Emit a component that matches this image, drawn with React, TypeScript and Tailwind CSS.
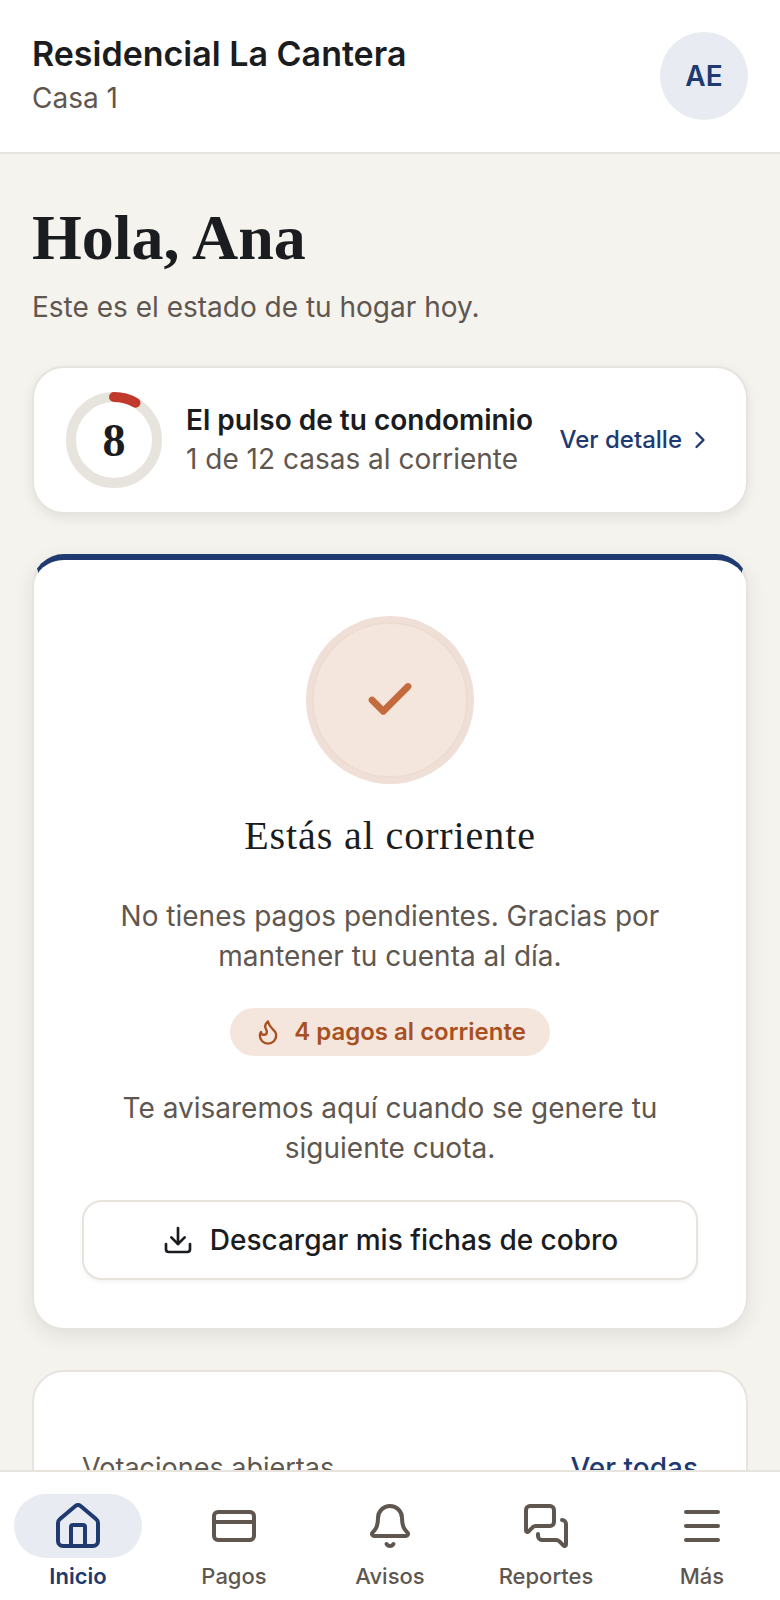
import { Check, ChevronRight, CreditCard, Bell, Download, Flame, Menu, MessagesSquare } from "lucide-react";

function HomeIcon({ className }: { size?: number; strokeWidth?: number; className?: string }) {
  return (
    <svg width="48" height="48" viewBox="0 0 24 24" fill="none" stroke="currentColor" strokeWidth="2" strokeLinecap="round" strokeLinejoin="round" className={className}>
      <path d="M2 10.5Q2 9.3 3 8.5L10.7 2Q12 1 13.3 2L21 8.5Q22 9.3 22 10.5V19.5A2.5 2.5 0 0 1 19.5 22H4.5A2.5 2.5 0 0 1 2 19.5Z" />
      <path d="M8.5 22V12.5A1 1 0 0 1 9.5 11.5H14.5A1 1 0 0 1 15.5 12.5V22" />
    </svg>
  );
}

const NAV = [
  { label: "Inicio", Icon: HomeIcon, active: true },
  { label: "Pagos", Icon: CreditCard, active: false },
  { label: "Avisos", Icon: Bell, active: false },
  { label: "Reportes", Icon: MessagesSquare, active: false },
  { label: "Más", Icon: Menu, active: false },
];

const serif = "font-['Liberation_Serif',serif]";

function Ring() {
  return (
    <div className="relative h-24 w-24 shrink-0">
      <svg viewBox="0 0 96 96" className="h-24 w-24 -rotate-90">
        <circle cx="48" cy="48" r="43" fill="none" stroke="#e7e4de" strokeWidth="10" />
        <circle cx="48" cy="48" r="43" fill="none" stroke="#c0392b" strokeWidth="10" strokeLinecap="round" strokeDasharray="22.5 270" />
      </svg>
      <div className={`absolute inset-0 flex items-center justify-center text-[46px] font-bold text-[#1a1c20] ${serif}`}>8</div>
    </div>
  );
}

export default function App() {
  return (
    <div className="flex h-[1600px] w-[780px] flex-col overflow-hidden bg-[#f5f3ee] font-['Inter',sans-serif]">
      <header className="flex h-[154px] shrink-0 items-center justify-between border-b-2 border-[#e7e4de] bg-white px-8">
        <div>
          <div className="text-[34px] leading-[42px] font-semibold text-[#1a1c20]">Residencial La Cantera</div>
          <div className="pt-[1px] text-[28px] leading-[44px] text-[#5f574f]">Casa 1</div>
        </div>
        <div className="flex h-[88px] w-[88px] items-center justify-center rounded-full bg-[#e8ebf2] text-[28px] font-semibold text-[#1e3a70]">AE</div>
      </header>

      <main className="min-h-0 flex-1 overflow-hidden px-8 pt-[48px]">
        <h1 className={`text-[64px] leading-[72px] font-bold text-[#1a1c20] ${serif}`}>Hola, Ana</h1>
        <p className="mt-[13px] text-[28px] leading-[40px] text-[#5f574f]">Este es el estado de tu hogar hoy.</p>

        <section className="mt-[39px] flex h-[148px] items-center rounded-[32px] border-2 border-[#e7e4de] bg-white pr-[32px] pl-[32px] shadow-[0_4px_12px_rgba(26,28,32,0.08)]">
          <Ring />
          <div className="ml-[24px] min-w-0 flex-1">
            <div className="text-[28px] leading-[38px] font-semibold text-[#1a1c20]">El pulso de tu condominio</div>
            <div className="text-[28px] leading-[40px] text-[#5f574f]">1 de 12 casas al corriente</div>
          </div>
          <div className="flex items-center gap-[4px] text-[24px] font-medium text-[#1e3a70]">
            Ver detalle <ChevronRight size={28} strokeWidth={2} />
          </div>
        </section>

        <section className="mt-[40px] flex flex-col items-center rounded-[32px] border-2 border-t-[6px] border-[#e7e4de] border-t-[#1e3a70] bg-white px-[48px] pt-[56px] pb-[48px] shadow-[0_6px_20px_rgba(26,28,32,0.09)]">
          <div className="flex h-[168px] w-[168px] items-center justify-center rounded-full bg-[#efdfd6]">
            <div className="flex h-[156px] w-[156px] items-center justify-center rounded-full border-2 border-[#ecdcd2] bg-[#f4e6dd]">
              <Check size={54} strokeWidth={3} className="text-[#c46a3c]" />
            </div>
          </div>
          <h2 className={`mt-[28px] text-[40px] leading-[48px] font-normal tracking-[0.9px] text-[#1a1c20] ${serif}`}>Estás al corriente</h2>
          <p className="mt-[36px] text-center text-[28px] leading-[40px] text-[#5f574f]">No tienes pagos pendientes. Gracias por mantener tu cuenta al día.</p>
          <div className="mt-[32px] flex h-[48px] items-center gap-[12px] rounded-full bg-[#f4e6dd] px-[24px] text-[24px] font-semibold text-[#a8501f]">
            <Flame size={28} strokeWidth={2} />
            4 pagos al corriente
          </div>
          <p className="mt-[32px] w-[560px] text-center text-[28px] leading-[40px] text-[#5f574f]">Te avisaremos aquí cuando se genere tu siguiente cuota.</p>
          <button className="mt-[32px] flex h-[80px] w-full items-center justify-center gap-[16px] rounded-[20px] border-2 border-[#e7e4de] bg-white text-[28px] font-medium text-[#1a1c20] shadow-[0_2px_4px_rgba(26,28,32,0.05)]">
            <Download size={32} strokeWidth={2} />
            Descargar mis fichas de cobro
          </button>
        </section>

        <section className="mt-[40px] rounded-[32px] border-2 border-[#e7e4de] bg-white px-[48px] pt-[76px] pb-[48px]">
          <div className="flex items-center justify-between leading-[40px]">
            <span className="text-[27px] font-normal text-[#5f574f]">Votaciones abiertas</span>
            <span className="text-[28px] font-medium text-[#1e3a70]">Ver todas</span>
          </div>
        </section>
      </main>

      <nav className="grid h-[130px] shrink-0 grid-cols-5 border-t-2 border-[#e7e4de] bg-white pt-[22px]">
        {NAV.map(({ label, Icon, active }) => (
          <div key={label} className="flex flex-col items-center">
            <div className={`flex h-[64px] w-[128px] items-center justify-center rounded-full ${active ? "bg-[#e8ebf2]" : ""}`}>
              <Icon size={48} strokeWidth={2} className={active ? "text-[#1e3a70]" : "text-[#5f574f]"} />
            </div>
            <div className={`mt-[2px] text-[22px] leading-[32px] ${active ? "font-semibold text-[#1e3a70]" : "font-medium text-[#5f574f]"}`}>{label}</div>
          </div>
        ))}
      </nav>
    </div>
  );
}
